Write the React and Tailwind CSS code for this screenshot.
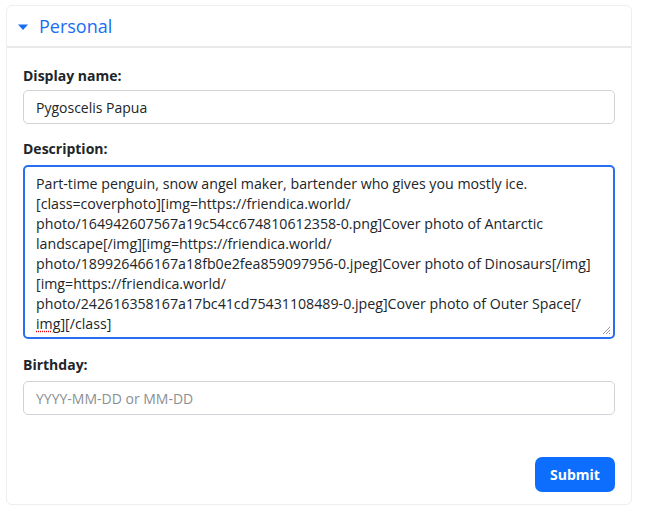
import React from 'react';

const lines = [
  'Part-time penguin, snow angel maker, bartender who gives you mostly ice.',
  '[class=coverphoto][img=https://friendica.world/',
  'photo/164942607567a19c54cc674810612358-0.png]Cover photo of Antarctic',
  'landscape[/img][img=https://friendica.world/',
  'photo/189926466167a18fb0e2fea859097956-0.jpeg]Cover photo of Dinosaurs[/img]',
  '[img=https://friendica.world/',
  'photo/242616358167a17bc41cd75431108489-0.jpeg]Cover photo of Outer Space[/',
];

export default function App() {
  return (
    <div className="w-[645px] h-[508px] bg-white pt-[5px] pl-[6px] font-['Open_Sans',sans-serif] text-[#212529]">
      <div className="w-[626px] h-[500px] rounded-[6px] border border-[#eeeeee] flex flex-col">
        {/* header */}
        <div className="h-[42px] flex items-center pl-[10px] border-b-2 border-[#e9e9e9]">
          <svg width="12" height="8" viewBox="0 0 12 8" className="mr-[10px] mt-[1px]">
            <path d="M1 1.5 L11 1.5 L6 7 Z" fill="#1a6cf2" />
          </svg>
          <span className="text-[18px] text-[#1a6cf2]">Personal</span>
        </div>

        {/* body */}
        <div className="flex flex-col px-[16px] pt-[18px]">
          <label className="text-[14px] font-bold leading-[20px] mb-[4px]">Display name:</label>
          <div className="h-[34px] rounded-[5px] border border-[#cfd3d7] flex items-center px-[12px] text-[14px]">
            Pygoscelis Papua
          </div>

          <label className="text-[14px] font-bold leading-[20px] mt-[15px] mb-[6px]">Description:</label>
          <div className="relative h-[174px] rounded-[5px] border-2 border-[#2a6ef0] px-[11px] pt-[7px] text-[14.2px] leading-[20px] whitespace-nowrap">
            {lines.map((l, i) => (
              <div key={i}>{l}</div>
            ))}
            <div>
              <span className="underline decoration-dotted decoration-red-600 underline-offset-2">img</span>][/class]
            </div>
            <svg width="10" height="10" viewBox="0 0 10 10" className="absolute right-[2px] bottom-[2px]">
              <path d="M9 2 L2 9 M9 5 L5 9 M9 8 L8 9" stroke="#999" strokeWidth="1" />
            </svg>
          </div>

          <label className="text-[14px] font-bold leading-[20px] mt-[16px] mb-[6px]">Birthday:</label>
          <div className="h-[34px] rounded-[5px] border border-[#cfd3d7] flex items-center px-[12px] text-[14px] text-[#8a8f94]">
            YYYY-MM-DD or MM-DD
          </div>

          <div className="flex justify-end mt-[42px]">
            <button className="h-[35px] w-[80px] rounded-[7px] bg-[#0d6efd] text-white text-[14px] font-bold">
              Submit
            </button>
          </div>
        </div>
      </div>
    </div>
  );
}
